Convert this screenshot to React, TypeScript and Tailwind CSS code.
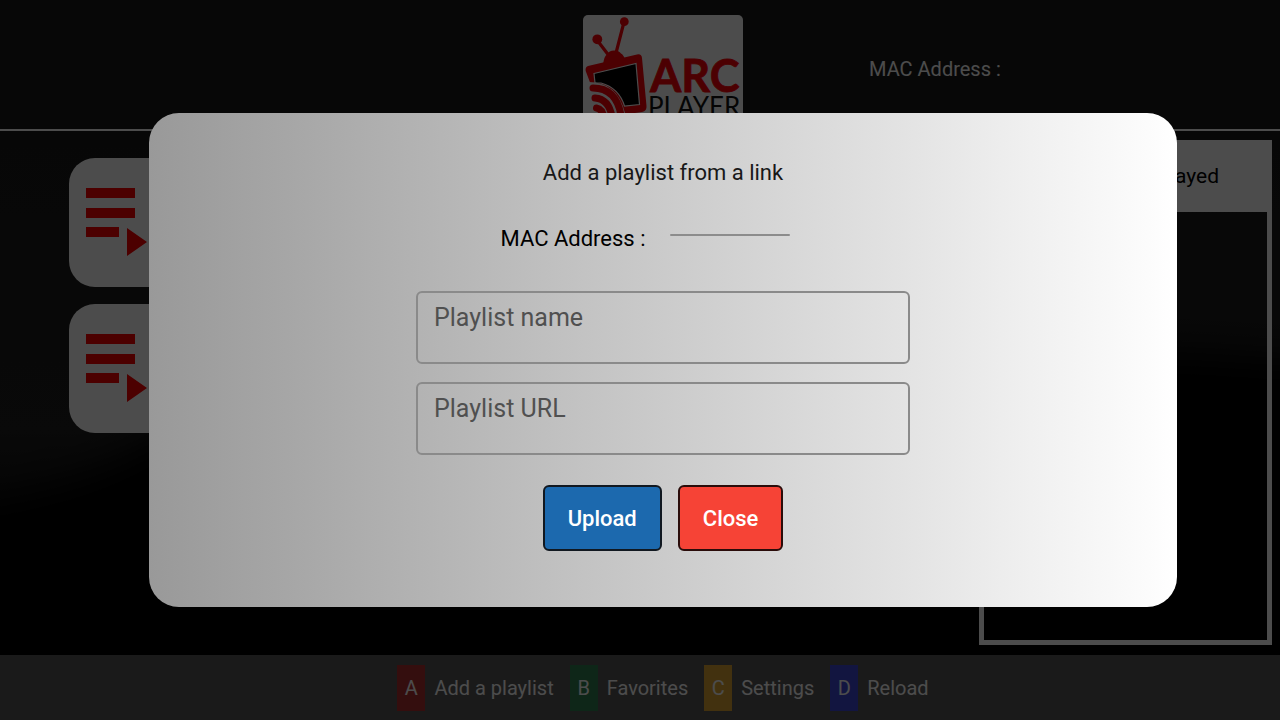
import React from "react";

function Logo() {
  return (
    <div className="h-28 overflow-hidden rounded-[5px] bg-white">
      <svg viewBox="0 0 160 112" className="block h-28 w-full" role="img" aria-label="ARC Player">
        <g fill="#ff0008" stroke="#ff0008">
          <circle cx="41.3" cy="6.7" r="4.4" stroke="none" />
          <circle cx="14.3" cy="24.3" r="4.9" stroke="none" />
          <path d="M40.5 9L33 38M15.5 27L27 42" strokeWidth="3.2" fill="none" />
          <path d="M20 50Q21 41 24 39.500Q26 35.500 31 35.500Q36 35.500 38 38.500Q41 40 42.500 46Z" stroke="none" />
          <path
            d="M5 51L54 39.500Q58.500 38.500 59 43L63.500 91Q64 96 59 97L10 104L8 70L2.700 56Q2 52 5 51Z"
            stroke="none"
          />
        </g>
        <path
          d="M11 58.500L53 48.500L56.500 89.500L41.500 91Q36 73 18 68L12 68Z"
          fill="#000"
          stroke="#fff"
          strokeWidth="1.2"
        />
        <path d="M4 67Q34 66 42 98L42 112L4 112Z" fill="#fff" />
        <g fill="none" stroke="#ff0008" strokeWidth="7" strokeLinecap="round">
          <path d="M10 73Q33 73 38 100" />
          <path d="M12 83Q26 84 29 102" />
          <path d="M13.500 93Q20 94 21 104" />
        </g>
        <text
          x="67"
          y="77"
          fontFamily="Lato, sans-serif"
          fontWeight="700"
          fontSize="45"
          fill="#ff0008"
          stroke="#ff0008"
          strokeWidth="0.8"
        >
          ARC
        </text>
        <text x="65" y="101" fontFamily="Lato, sans-serif" fontWeight="400" fontSize="26" fill="#111">
          PLAYER
        </text>
      </svg>
    </div>
  );
}

function PlaylistCard({ label }: { label: string }) {
  return (
    <button
      type="button"
      aria-label={label}
      className="flex h-[129px] w-[360px] items-start rounded-[26px] bg-white pl-[17px] pt-[30px]"
    >
      <svg viewBox="0 0 62 68" className="h-[68px] w-[62px]" fill="#ff0000" aria-hidden="true">
        <path d="M0 0h49v10H0zM0 20h49v10H0zM0 39h33v10H0zM41 40l20 14l-20 14z" />
      </svg>
    </button>
  );
}

const shortcuts = [
  { key: "A", label: "Add a playlist", color: "bg-[#b03030]" },
  { key: "B", label: "Favorites", color: "bg-[#2f8050]" },
  { key: "C", label: "Settings", color: "bg-[#dca534]" },
  { key: "D", label: "Reload", color: "bg-[#3c46d8]" },
];

const fieldClass =
  "block h-[73px] w-full rounded-md border-2 border-[#8a8a8a] bg-transparent px-4 pb-5 text-[25px] leading-8 text-[#202020] outline-none placeholder:text-[#505050] placeholder:opacity-100";

function Backdrop() {
  return (
    <svg
      className="absolute inset-0 h-full w-full"
      viewBox="0 0 1280 720"
      preserveAspectRatio="none"
      aria-hidden="true"
    >
      <defs>
        <linearGradient id="sky" x1="0" y1="0" x2="0" y2="1">
          <stop offset="0" stopColor="#181818" />
          <stop offset="0.6" stopColor="#1e1e1e" />
          <stop offset="0.85" stopColor="#000" />
        </linearGradient>
        <filter id="soft">
          <feGaussianBlur stdDeviation="20" />
        </filter>
      </defs>
      <rect width="1280" height="720" fill="url(#sky)" />
      <path
        d="M-60 510Q90 490 160 435L400 330L800 350L1180 350L1340 360V780H-60Z"
        fill="#000"
        filter="url(#soft)"
      />
    </svg>
  );
}

function AddPlaylistDialog() {
  return (
    <div className="absolute inset-0 flex items-center bg-black/70 pl-[149px] pr-[103px]">
      <section
        role="dialog"
        aria-modal="true"
        aria-labelledby="dialog-title"
        className="flex w-full flex-col items-center rounded-[30px] bg-linear-to-r from-[#999] to-white px-6 pb-14 pt-11"
      >
        <h2 id="dialog-title" className="text-[22px] leading-8 text-[#181818]">
          Add a playlist from a link
        </h2>
        <p className="mt-[34px] flex items-center gap-6 text-[22px] leading-8 text-black">
          MAC Address :
          <span className="mb-2 mr-9 h-0.5 w-[120px] rounded-full bg-[#8c8c8c]" />
        </p>
        <form
          className="mt-9 flex w-full max-w-[494px] flex-col gap-[18px]"
          onSubmit={(e) => e.preventDefault()}
        >
          <label>
            <span className="sr-only">Playlist name</span>
            <input type="text" placeholder="Playlist name" className={fieldClass} />
          </label>
          <label>
            <span className="sr-only">Playlist URL</span>
            <input type="text" placeholder="Playlist URL" className={fieldClass} />
          </label>
          <div className="mt-3 flex justify-center gap-4 text-[22px] font-medium text-white">
            <button
              type="submit"
              className="h-[66px] rounded-md border-2 border-[#111820] bg-[#1c69ae] px-[23px]"
            >
              Upload
            </button>
            <button
              type="button"
              className="h-[66px] rounded-md border-2 border-[#2a0c0a] bg-[#f64336] px-[23px]"
            >
              Close
            </button>
          </div>
        </form>
      </section>
    </div>
  );
}

export default function App() {
  return (
    <div className="relative flex min-h-screen flex-col overflow-hidden bg-black font-[Roboto,sans-serif] text-white">
      <Backdrop />
      <header className="relative grid h-[131px] grid-cols-[583fr_160px_537fr] border-b-2 border-white pt-[15px]">
        <div />
        <Logo />
        <p className="pl-[126px] pt-[38px] text-[20px] leading-8">MAC Address :</p>
      </header>
      <main className="relative flex flex-1 justify-between pb-2.5 pl-[69px] pr-2 pt-[9px]">
        <nav className="flex flex-col gap-[17px] pt-[18px]">
          <PlaylistCard label="Add a playlist from a link" />
          <PlaylistCard label="Add a playlist from a file" />
        </nav>
        <aside className="w-[293px] border-5 border-white">
          <h2 className="flex h-[67px] items-center justify-end bg-white pb-1 pr-12 text-[21px] text-black">
            Recently played
          </h2>
        </aside>
      </main>
      <footer className="relative flex h-[65px] items-center justify-center gap-4 bg-[#575757] pl-[46px] text-[20px]">
        {shortcuts.map((s) => (
          <button key={s.key} type="button" className="flex items-center gap-[9px]">
            <kbd
              className={`flex h-[46px] w-7 items-center justify-center font-[Roboto,sans-serif] ${s.color}`}
            >
              {s.key}
            </kbd>
            {s.label}
          </button>
        ))}
      </footer>
      <AddPlaylistDialog />
    </div>
  );
}
